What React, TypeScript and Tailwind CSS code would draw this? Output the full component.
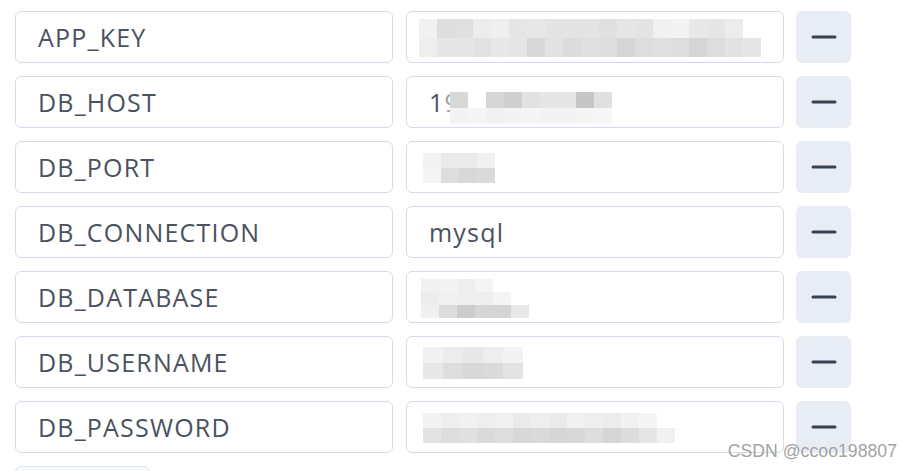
import type { ReactNode } from "react"

type Cell = string
type Row = {
	name: string
	value?: ReactNode
}

// blurred values, drawn as mosaic blocks
const Mosaic = ({ rows, cell = "w-[18px] h-[18px]" }: { rows: Cell[][]; cell?: string }) => (
	<div className="flex flex-col">
		{rows.map((r, i) => (
			<div key={i} className="flex">
				{r.map((c, j) => (
					<div key={j} className={`${cell} ${c}`} />
				))}
			</div>
		))}
	</div>
)

const appKey: Cell[][] = [
	["bg-[#f1f1f1]", "bg-[#dedede]", "bg-[#e0e0e0]", "bg-[#ececec]", "bg-[#efefef]", "bg-[#e6e6e6]", "bg-[#e8e8e8]", "bg-[#e4e4e4]", "bg-[#e4e4e4]", "bg-[#e4e4e4]", "bg-[#e0e0e0]", "bg-[#e6e6e6]", "bg-[#e4e4e4]", "bg-[#f1f1f1]", "bg-[#f3f3f3]", "bg-[#e8e8e8]", "bg-[#e6e6e6]", "bg-[#ececec]", "bg-white"],
	["bg-[#eeeeee]", "bg-[#e6e6e6]", "bg-[#e6e6e6]", "bg-[#e2e2e2]", "bg-[#e8e8e8]", "bg-[#e6e6e6]", "bg-[#d8d8d8]", "bg-[#e2e2e2]", "bg-[#dcdcdc]", "bg-[#e0e0e0]", "bg-[#dddddd]", "bg-[#d6d6d6]", "bg-[#dddddd]", "bg-[#e0e0e0]", "bg-[#dddddd]", "bg-[#d6d6d6]", "bg-[#dddddd]", "bg-[#e2e2e2]", "bg-[#e6e6e6]"],
]

const host: Cell[][] = [
	["bg-[#d8d8d8]", "bg-white", "bg-[#d6d6d6]", "bg-[#cfcfcf]", "bg-[#e2e2e2]", "bg-[#e6e6e6]", "bg-[#e6e6e6]", "bg-[#c6c6c6]", "bg-[#e0e0e0]"],
	["bg-[#f3f3f3]", "bg-[#f5f5f5]", "bg-[#f1f1f1]", "bg-[#f3f3f3]", "bg-[#f5f5f5]", "bg-[#f3f3f3]", "bg-[#f3f3f3]", "bg-[#f5f5f5]", "bg-[#f7f7f7]"],
]

const port: Cell[][] = [
	["bg-[#f3f3f3]", "bg-[#eaeaea]", "bg-[#ebebeb]", "bg-[#f1f1f1]"],
	["bg-[#f5f5f5]", "bg-[#dddddd]", "bg-[#d8d8d8]", "bg-[#dadada]"],
]

const database: Cell[][] = [
	["bg-[#f1f1f1]", "bg-[#f3f3f3]", "bg-[#eeeeee]", "bg-[#f4f4f4]", "bg-white", "bg-white"],
	["bg-[#ececec]", "bg-[#f1f1f1]", "bg-[#eeeeee]", "bg-[#eeeeee]", "bg-[#f5f5f5]", "bg-white"],
	["bg-[#f0f0f0]", "bg-[#dcdcdc]", "bg-[#cccccc]", "bg-[#d6d6d6]", "bg-[#d4d4d4]", "bg-[#e8e8e8]"],
]

const username: Cell[][] = [
	["bg-[#f1f1f1]", "bg-[#ececec]", "bg-[#e8e8e8]", "bg-[#eeeeee]", "bg-[#f3f3f3]"],
	["bg-[#e8e8e8]", "bg-[#dddddd]", "bg-[#d8d8d8]", "bg-[#dadada]", "bg-[#e4e4e4]"],
]

const password: Cell[][] = [
	["bg-[#f3f3f3]", "bg-[#eeeeee]", "bg-[#f1f1f1]", "bg-[#eeeeee]", "bg-[#f1f1f1]", "bg-[#eaeaea]", "bg-[#eeeeee]", "bg-[#eaeaea]", "bg-[#f1f1f1]", "bg-[#eeeeee]", "bg-[#ececec]", "bg-[#f1f1f1]", "bg-[#f5f5f5]", "bg-white"],
	["bg-[#e4e4e4]", "bg-[#dddddd]", "bg-[#e0e0e0]", "bg-[#dadada]", "bg-[#dedede]", "bg-[#d8d8d8]", "bg-[#dadada]", "bg-[#d6d6d6]", "bg-[#d8d8d8]", "bg-[#dedede]", "bg-[#d6d6d6]", "bg-[#dcdcdc]", "bg-[#e6e6e6]", "bg-[#f1f1f1]"],
]

const rows: Row[] = [
	{
		name: "APP_KEY",
		value: (
			<div className="-ml-[10px]">
				<Mosaic rows={appKey} cell="w-[18px] h-[19px]" />
			</div>
		),
	},
	{
		name: "DB_HOST",
		value: (
			<div className="flex items-center">
				<span>1</span>
				<span className="text-[#9aa1ab]">9</span>
				<div className="-ml-[10px] mt-[10px]">
					<Mosaic rows={host} cell="w-[18px] h-[16px]" />
				</div>
			</div>
		),
	},
	{
		name: "DB_PORT",
		value: (
			<div className="-ml-[6px]">
				<Mosaic rows={port} cell="w-[18px] h-[15px]" />
			</div>
		),
	},
	{ name: "DB_CONNECTION", value: "mysql" },
	{
		name: "DB_DATABASE",
		value: (
			<div className="-ml-[8px]">
				<Mosaic rows={database} cell="w-[18px] h-[13px]" />
			</div>
		),
	},
	{
		name: "DB_USERNAME",
		value: (
			<div className="-ml-[6px]">
				<Mosaic rows={username} cell="w-[20px] h-[16px]" />
			</div>
		),
	},
	{
		name: "DB_PASSWORD",
		value: (
			<div className="-ml-[6px]">
				<Mosaic rows={password} cell="w-[18px] h-[15px]" />
			</div>
		),
	},
]

const field = "h-[52px] w-[378px] flex items-center pl-[22px] pt-[2px] rounded-[6px] border border-[#d3dde9] bg-white"

const App = () => {
	return (
		<div
			className="relative h-[471px] w-[900px] overflow-hidden bg-white pl-[15px] pt-[11px] text-[25px] tracking-[1.2px] text-[#4a5260]"
			style={{ fontFamily: '"Open Sans", "Liberation Sans", sans-serif' }}
		>
			<div className="flex flex-col gap-[13px]">
				{rows.map((row) => (
					<div key={row.name} className="flex items-center">
						<div className={field}>{row.name}</div>
						<div className={`${field} ml-[13px]`}>{row.value}</div>
						<button
							type="button"
							className="ml-[12px] flex h-[52px] w-[55px] items-center justify-center rounded-[6px] bg-[#e8edf5]"
						>
							<svg width="26" height="6" viewBox="0 0 26 6">
								<line x1="2" y1="3" x2="24" y2="3" stroke="#374151" strokeWidth="3" strokeLinecap="round" />
							</svg>
						</button>
					</div>
				))}
				<div className="h-[40px] w-[135px] rounded-[6px] border border-[#dfe6ef] bg-[#f7f9fc]" />
			</div>
			<div
				className="absolute bottom-[6px] right-[3px] text-[17.7px] tracking-normal text-[#a3a3a3]"
				style={{ fontFamily: '"Liberation Sans", sans-serif' }}
			>
				CSDN @ccoo198807
			</div>
		</div>
	)
}

export default App
